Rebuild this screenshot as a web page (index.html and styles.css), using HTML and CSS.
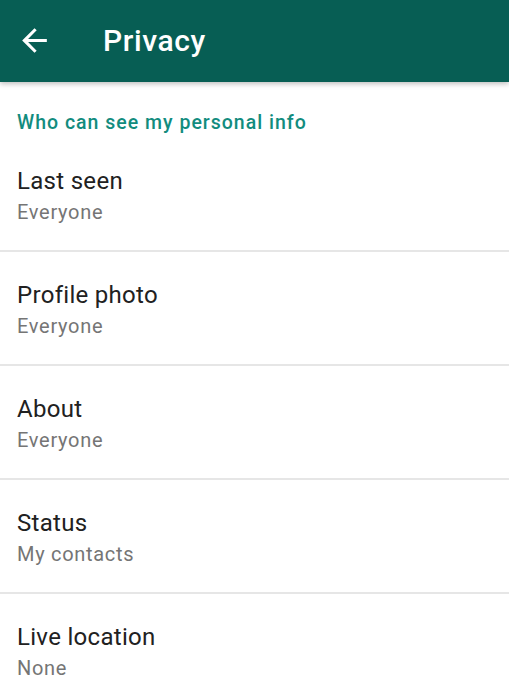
FILE: index.html
```html
<!DOCTYPE html>
<html>
<head>
<meta charset="utf-8">
<link rel="stylesheet" href="styles.css">
</head>
<body>
<header class="appbar">
  <svg class="back" width="37" height="37" viewBox="0 0 24 24"><path d="M20 11H7.83l5.59-5.59L12 4l-8 8 8 8 1.41-1.41L7.83 13H20v-2z" fill="#fff"/></svg>
  <h1 class="title">Privacy</h1>
</header>
<main class="content">
  <div class="section-title">Who can see my personal info</div>
  <div class="item">
    <div class="item-title">Last seen</div>
    <div class="item-sub">Everyone</div>
  </div>
  <div class="item">
    <div class="item-title">Profile photo</div>
    <div class="item-sub">Everyone</div>
  </div>
  <div class="item">
    <div class="item-title">About</div>
    <div class="item-sub">Everyone</div>
  </div>
  <div class="item">
    <div class="item-title">Status</div>
    <div class="item-sub">My contacts</div>
  </div>
  <div class="item">
    <div class="item-title">Live location</div>
    <div class="item-sub">None</div>
  </div>
</main>
</body>
</html>
```
FILE: styles.css
```css
html, body {
  margin: 0;
  padding: 0;
  background: #fff;
  font-family: Roboto, "Noto Sans", sans-serif;
  overflow: hidden;
}
.appbar {
  height: 82px;
  background: #075e54;
  display: flex;
  align-items: center;
  padding-left: 16px;
  box-shadow: 0 2px 5px rgba(0,0,0,0.25);
  position: relative;
  z-index: 1;
}
.back {
  display: block;
  margin-top: -2px;
}
.title {
  margin: 0 0 0 50px;
  color: #fff;
  font-size: 30px;
  font-weight: 500;
  letter-spacing: 0.6px;
  line-height: 1;
}
.section-title {
  color: #128c7e;
  font-size: 19.5px;
  font-weight: 500;
  letter-spacing: 1px;
  line-height: 20px;
  padding: 31px 17px 5px;
}
.item {
  padding: 28px 17px 25px;
  border-bottom: 2px solid #e6e6e6;
}
.item-title {
  font-size: 24px;
  letter-spacing: 0.3px;
  line-height: 30px;
  color: #212121;
}
.item-sub {
  font-size: 20px;
  letter-spacing: 0.7px;
  line-height: 26px;
  margin-top: 3px;
  color: #757575;
}
```
